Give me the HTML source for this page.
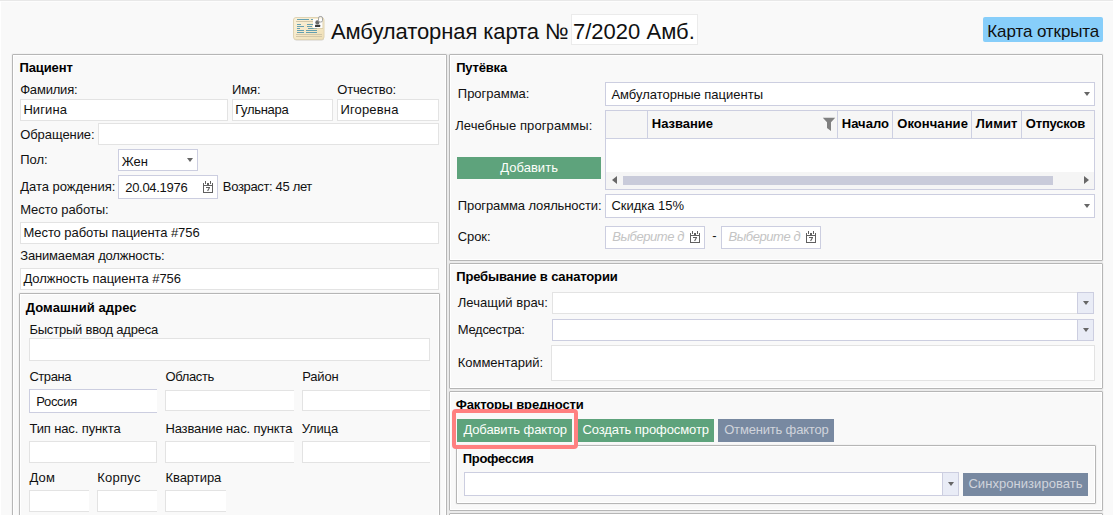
<!DOCTYPE html>
<html lang="ru"><head><meta charset="utf-8"><title>Амбулаторная карта</title>
<style>
html,body{margin:0;padding:0}
body{width:1113px;height:515px;overflow:hidden;background:#f9f9f9;position:relative;font-family:"Liberation Sans",sans-serif;font-size:13px;color:#111}
.a{position:absolute;box-sizing:border-box}
.t{position:absolute;white-space:nowrap;line-height:16px;height:16px}
.g{position:absolute;box-sizing:border-box;border:1px solid #b6b6b6;border-radius:1px;box-shadow:inset 0 0 0 1px #fff,0 0 0 1px #f3f3f3}
.i{position:absolute;box-sizing:border-box;border:1px solid #e3e3e3;background:#fff}
.c{position:absolute;box-sizing:border-box;border:1px solid #cccee0;background:#fff}
.ar{position:absolute;width:0;height:0;border-left:3px solid transparent;border-right:3px solid transparent;border-top:4px solid #666}
.db{position:absolute;box-sizing:border-box;border:1px solid #cccee0;background:#e9ecf6}
.bt{position:absolute;background:#5ea37c}
.bg{position:absolute;background:#7889a1}
.gap{position:absolute;background:#ebebeb}
</style></head>
<body>
<div class="a" style="left:0;top:0;width:1113px;height:1px;background:#e8e8e8"></div>
<div class="a" style="left:0;top:1px;width:1113px;height:1px;background:#fdfdfd"></div>
<div class="a" style="left:0;top:1px;width:1px;height:514px;background:#fff"></div>
<div class="g" style="left:12px;top:54px;width:435px;height:507px;background:#f9f9f9"></div>
<div class="g" style="left:19px;top:293px;width:421px;height:268px;background:#f9f9f9"></div>
<div class="g" style="left:449px;top:54px;width:654px;height:207px;background:#f9f9f9"></div>
<div class="g" style="left:449px;top:263px;width:654px;height:126px;background:#f9f9f9"></div>
<div class="g" style="left:449px;top:391px;width:654px;height:120px;background:#f9f9f9"></div>
<div class="g" style="left:456px;top:445px;width:640px;height:59px;background:#f9f9f9"></div>
<div class="g" style="left:449px;top:513px;width:654px;height:48px;background:#f9f9f9"></div>
<div class="gap" style="left:447px;top:54px;width:2px;height:461px"></div>
<div class="gap" style="left:449px;top:261px;width:654px;height:2px"></div>
<div class="gap" style="left:449px;top:389px;width:654px;height:2px"></div>
<div class="gap" style="left:449px;top:511px;width:654px;height:2px"></div>
<div class="i" style="left:571px;top:14px;width:127px;height:31px;border-color:#ebebeb"></div>
<div class="a" style="left:983px;top:17px;width:120px;height:25px;background:#87cefa;border-radius:2px"></div>
<div class="i" style="left:20px;top:99px;width:208px;height:22px;"></div>
<div class="i" style="left:232px;top:99px;width:101px;height:22px;"></div>
<div class="i" style="left:337px;top:99px;width:102px;height:22px;"></div>
<div class="i" style="left:98px;top:123px;width:341px;height:22px;"></div>
<div class="c" style="left:118px;top:149px;width:80px;height:22px;"></div>
<div class="ar" style="left:187px;top:158px;border-left-width:3.0px;border-right-width:3.0px;border-top:4px solid #666"></div>
<div class="c" style="left:118px;top:175px;width:100px;height:24px;"></div>
<div class="i" style="left:20px;top:222px;width:419px;height:22px;"></div>
<div class="i" style="left:20px;top:268px;width:419px;height:22px;"></div>
<div class="i" style="left:29px;top:338px;width:401px;height:23px;"></div>
<div class="c" style="left:29px;top:389px;width:128px;height:24px;border-right:none"></div>
<div class="i" style="left:165px;top:390px;width:129px;height:21px;border-right:none"></div>
<div class="i" style="left:302px;top:390px;width:128px;height:21px;border-right:none"></div>
<div class="i" style="left:29px;top:441px;width:128px;height:22px;"></div>
<div class="i" style="left:165px;top:441px;width:129px;height:22px;border-right:none"></div>
<div class="i" style="left:302px;top:441px;width:128px;height:22px;border-right:none"></div>
<div class="i" style="left:29px;top:490px;width:60px;height:22px;border-right:none"></div>
<div class="i" style="left:97px;top:490px;width:60px;height:22px;border-right:none"></div>
<div class="i" style="left:165px;top:490px;width:61px;height:22px;border-right:none"></div>
<div class="c" style="left:605px;top:82px;width:490px;height:24px;"></div>
<div class="ar" style="left:1084px;top:92px;border-left-width:3.0px;border-right-width:3.0px;border-top:4px solid #666"></div>
<div class="c" style="left:605px;top:110px;width:490px;height:80px"></div>
<div class="a" style="left:606px;top:111px;width:488px;height:27px;background:#f6f6f6"></div>
<div class="a" style="left:606px;top:138px;width:488px;height:1px;background:#cdd0e2"></div>
<div class="a" style="left:647px;top:111px;width:1px;height:27px;background:#cdd0e2"></div>
<div class="a" style="left:837px;top:111px;width:1px;height:27px;background:#cdd0e2"></div>
<div class="a" style="left:892px;top:111px;width:1px;height:27px;background:#cdd0e2"></div>
<div class="a" style="left:971px;top:111px;width:1px;height:27px;background:#cdd0e2"></div>
<div class="a" style="left:1021px;top:111px;width:1px;height:27px;background:#cdd0e2"></div>
<svg class="a" style="left:822px;top:117px" width="14" height="15" viewBox="0 0 14 15"><path d="M0.8 0.8 H13.2 L9 5.2 V14 L5 11 V5.2 Z" fill="#808080"/></svg>
<div class="a" style="left:606px;top:172px;width:488px;height:17px;background:#f5f5f5"></div>
<div class="a" style="left:623px;top:176px;width:430px;height:9px;background:#c9cbda"></div>
<div class="a" style="left:612px;top:176px;width:0;height:0;border-top:4.5px solid transparent;border-bottom:4.5px solid transparent;border-right:5px solid #686868"></div>
<div class="a" style="left:1084px;top:176px;width:0;height:0;border-top:4.5px solid transparent;border-bottom:4.5px solid transparent;border-left:5px solid #686868"></div>
<div class="bt" style="left:457px;top:157px;width:144px;height:22px"></div>
<div class="c" style="left:605px;top:194px;width:490px;height:24px;"></div>
<div class="ar" style="left:1084px;top:204px;border-left-width:3.0px;border-right-width:3.0px;border-top:4px solid #666"></div>
<div class="c" style="left:605px;top:226px;width:100px;height:23px;"></div>
<div class="c" style="left:721px;top:226px;width:100px;height:23px;"></div>
<div class="i" style="left:552px;top:292px;width:526px;height:22px;"></div>
<div class="db" style="left:1077px;top:292px;width:17px;height:22px"></div>
<div class="ar" style="left:1083px;top:301px;border-left-width:3.0px;border-right-width:3.0px;border-top:4px solid #666"></div>
<div class="c" style="left:552px;top:319px;width:526px;height:22px;"></div>
<div class="db" style="left:1077px;top:319px;width:17px;height:22px"></div>
<div class="ar" style="left:1083px;top:328px;border-left-width:3.0px;border-right-width:3.0px;border-top:4px solid #666"></div>
<div class="i" style="left:551px;top:345px;width:544px;height:36px;"></div>
<div class="bt" style="left:457px;top:419px;width:115px;height:23px"></div>
<div class="bt" style="left:578px;top:419px;width:136px;height:23px"></div>
<div class="bg" style="left:718px;top:419px;width:116px;height:23px"></div>
<div class="c" style="left:464px;top:472px;width:479px;height:24px;"></div>
<div class="db" style="left:942px;top:472px;width:17px;height:24px"></div>
<div class="ar" style="left:948px;top:482px;border-left-width:3.0px;border-right-width:3.0px;border-top:4px solid #666"></div>
<div class="bg" style="left:963px;top:473px;width:125px;height:23px"></div>
<svg class="a" style="left:203px;top:181px" width="10" height="12" viewBox="0 0 10 12" shape-rendering="crispEdges"><g fill="#606060"><rect x="0" y="2" width="1" height="10"/><rect x="9" y="2" width="1" height="10"/><rect x="0" y="11" width="10" height="1"/><rect x="0" y="4" width="10" height="1"/><rect x="2" y="0" width="1" height="3"/><rect x="7" y="0" width="1" height="3"/><rect x="4" y="2" width="2" height="2"/><rect x="3" y="6" width="4" height="1"/></g><path d="M6.4 6.8 L4.6 10" stroke="#606060" stroke-width="1.1" fill="none" shape-rendering="auto"/></svg>
<svg class="a" style="left:690px;top:231px" width="10" height="12" viewBox="0 0 10 12" shape-rendering="crispEdges"><g fill="#606060"><rect x="0" y="2" width="1" height="10"/><rect x="9" y="2" width="1" height="10"/><rect x="0" y="11" width="10" height="1"/><rect x="0" y="4" width="10" height="1"/><rect x="2" y="0" width="1" height="3"/><rect x="7" y="0" width="1" height="3"/><rect x="4" y="2" width="2" height="2"/><rect x="3" y="6" width="4" height="1"/></g><path d="M6.4 6.8 L4.6 10" stroke="#606060" stroke-width="1.1" fill="none" shape-rendering="auto"/></svg>
<svg class="a" style="left:806px;top:231px" width="10" height="12" viewBox="0 0 10 12" shape-rendering="crispEdges"><g fill="#606060"><rect x="0" y="2" width="1" height="10"/><rect x="9" y="2" width="1" height="10"/><rect x="0" y="11" width="10" height="1"/><rect x="0" y="4" width="10" height="1"/><rect x="2" y="0" width="1" height="3"/><rect x="7" y="0" width="1" height="3"/><rect x="4" y="2" width="2" height="2"/><rect x="3" y="6" width="4" height="1"/></g><path d="M6.4 6.8 L4.6 10" stroke="#606060" stroke-width="1.1" fill="none" shape-rendering="auto"/></svg>
<svg class="a" style="left:290px;top:12px" width="38" height="32" viewBox="0 0 38 32">
<defs><linearGradient id="cg" x1="0" y1="0" x2="1" y2="1"><stop offset="0" stop-color="#fbf2da"/><stop offset="1" stop-color="#efdfb6"/></linearGradient></defs>
<rect x="4" y="6.5" width="30" height="22" rx="2.5" fill="#8a8270" opacity=".35"/>
<rect x="3.5" y="5.5" width="30.5" height="22" rx="2.5" fill="url(#cg)" stroke="#e0d4b4" stroke-width="1"/>
<g fill="#4b93ad" fill-opacity=".85" shape-rendering="crispEdges"><rect x="7" y="7" width="12" height="1"/><rect x="21" y="7" width="2" height="1"/>
<rect x="7" y="12" width="4" height="1"/><rect x="17" y="12" width="6" height="1"/>
<rect x="7" y="14" width="7" height="1"/><rect x="17" y="14" width="5" height="1"/>
<rect x="7" y="16" width="3" height="1"/><rect x="18" y="16" width="9" height="1"/>
<rect x="7" y="18" width="7" height="1"/><rect x="16" y="18" width="11" height="1"/>
<rect x="7" y="20" width="7" height="1"/><rect x="16" y="20" width="11" height="1"/></g>
<g fill="#d3c7a8" shape-rendering="crispEdges"><rect x="6" y="9" width="17" height="1"/><rect x="6" y="22" width="26" height="1"/><rect x="6" y="24" width="26" height="1"/></g>
<rect x="23.5" y="7.5" width="9.5" height="9.5" fill="#cdbf9c" opacity=".6"/>
<rect x="23" y="7" width="9.5" height="9" fill="#fdfdfd"/>
<circle cx="27.4" cy="10.4" r="2.1" fill="#6a6a6a"/><rect x="25" y="12.8" width="5.2" height="2.2" rx=".5" fill="#3c3c3c"/>
<rect x="28.5" y="4.5" width="4" height="5.5" rx="1.6" fill="#fff" fill-opacity=".55" stroke="#a2a2a2" stroke-width="1"/>
</svg>
<div class="t" style="left:331.0px;top:18px;letter-spacing:-0.093px;color:#111;font-size:22px;line-height:28px;height:28px;">Амбулаторная карта №</div>
<div class="t" style="left:572.9px;top:18px;letter-spacing:0.030px;color:#111;font-size:22px;line-height:28px;height:28px;">7/2020 Амб.</div>
<div class="t" style="left:987.3px;top:21px;letter-spacing:-0.104px;color:#101010;font-size:17px;line-height:22px;height:22px;">Карта открыта</div>
<div class="t" style="left:19.4px;top:60px;letter-spacing:-0.102px;color:#000;font-weight:700;">Пациент</div>
<div class="t" style="left:20.2px;top:82px;letter-spacing:-0.202px;color:#111;">Фамилия:</div>
<div class="t" style="left:232.0px;top:82px;letter-spacing:-0.134px;color:#111;">Имя:</div>
<div class="t" style="left:337.2px;top:82px;letter-spacing:-0.147px;color:#111;">Отчество:</div>
<div class="t" style="left:23.4px;top:102px;letter-spacing:0.090px;color:#111;">Нигина</div>
<div class="t" style="left:235.2px;top:102px;letter-spacing:-0.303px;color:#111;">Гульнара</div>
<div class="t" style="left:340.4px;top:102px;letter-spacing:0.173px;color:#111;">Игоревна</div>
<div class="t" style="left:20.2px;top:127px;letter-spacing:-0.069px;color:#111;">Обращение:</div>
<div class="t" style="left:20.2px;top:152px;letter-spacing:-0.025px;color:#111;">Пол:</div>
<div class="t" style="left:121.8px;top:154px;letter-spacing:-0.022px;color:#111;">Жен</div>
<div class="t" style="left:20.2px;top:179px;letter-spacing:-0.009px;color:#111;">Дата рождения:</div>
<div class="t" style="left:125.2px;top:180px;letter-spacing:-0.288px;color:#111;">20.04.1976</div>
<div class="t" style="left:222.8px;top:179px;letter-spacing:-0.338px;color:#111;">Возраст: 45 лет</div>
<div class="t" style="left:20.2px;top:202px;letter-spacing:-0.056px;color:#111;">Место работы:</div>
<div class="t" style="left:23.4px;top:225px;letter-spacing:-0.072px;color:#111;">Место работы пациента #756</div>
<div class="t" style="left:20.2px;top:248px;letter-spacing:-0.163px;color:#111;">Занимаемая должность:</div>
<div class="t" style="left:23.4px;top:271px;letter-spacing:-0.034px;color:#111;">Должность пациента #756</div>
<div class="t" style="left:25.8px;top:300px;letter-spacing:0.067px;color:#000;font-weight:700;">Домашний адрес</div>
<div class="t" style="left:29.4px;top:322px;letter-spacing:-0.210px;color:#111;">Быстрый ввод адреса</div>
<div class="t" style="left:29.4px;top:369px;letter-spacing:-0.436px;color:#111;">Страна</div>
<div class="t" style="left:165.4px;top:369px;letter-spacing:-0.347px;color:#111;">Область</div>
<div class="t" style="left:302.2px;top:369px;letter-spacing:-0.148px;color:#111;">Район</div>
<div class="t" style="left:36.2px;top:394px;letter-spacing:-0.307px;color:#111;">Россия</div>
<div class="t" style="left:29.4px;top:421px;letter-spacing:-0.121px;color:#111;">Тип нас. пункта</div>
<div class="t" style="left:165.4px;top:421px;letter-spacing:-0.122px;color:#111;">Название нас. пункта</div>
<div class="t" style="left:301.8px;top:421px;letter-spacing:-0.144px;color:#111;">Улица</div>
<div class="t" style="left:29.4px;top:470px;letter-spacing:0.225px;color:#111;">Дом</div>
<div class="t" style="left:97.2px;top:470px;letter-spacing:0.260px;color:#111;">Корпус</div>
<div class="t" style="left:165.4px;top:470px;letter-spacing:-0.036px;color:#111;">Квартира</div>
<div class="t" style="left:456.2px;top:60px;letter-spacing:-0.180px;color:#000;font-weight:700;">Путёвка</div>
<div class="t" style="left:457.8px;top:86px;letter-spacing:-0.013px;color:#111;">Программа:</div>
<div class="t" style="left:611.4px;top:87px;letter-spacing:-0.004px;color:#111;">Амбулаторные пациенты</div>
<div class="t" style="left:455.2px;top:118px;letter-spacing:0.088px;color:#111;">Лечебные программы:</div>
<div class="t" style="left:651.8px;top:116px;letter-spacing:-0.022px;color:#000;font-weight:700;">Название</div>
<div class="t" style="left:841.8px;top:116px;letter-spacing:0.015px;color:#000;font-weight:700;">Начало</div>
<div class="t" style="left:897.2px;top:116px;letter-spacing:0.078px;color:#000;font-weight:700;">Окончание</div>
<div class="t" style="left:975.8px;top:116px;letter-spacing:0.141px;color:#000;font-weight:700;">Лимит</div>
<div class="t" style="left:1025.8px;top:116px;letter-spacing:-0.192px;color:#000;font-weight:700;">Отпусков</div>
<div class="t" style="left:500.2px;top:160px;letter-spacing:0.043px;color:#fdfffb;">Добавить</div>
<div class="t" style="left:457.8px;top:198px;letter-spacing:-0.106px;color:#111;">Программа лояльности:</div>
<div class="t" style="left:611.4px;top:198px;letter-spacing:-0.017px;color:#111;">Скидка 15%</div>
<div class="t" style="left:457.8px;top:229px;letter-spacing:-0.111px;color:#111;">Срок:</div>
<div class="t" style="left:612.2px;top:229px;letter-spacing:-0.431px;color:#c4c4c4;font-style:italic;">Выберите д</div>
<div class="t" style="left:728.4px;top:229px;letter-spacing:-0.431px;color:#c4c4c4;font-style:italic;">Выберите д</div>
<div class="t" style="left:712.2px;top:228px;letter-spacing:1.256px;color:#111;">-</div>
<div class="t" style="left:456.2px;top:269px;letter-spacing:-0.144px;color:#000;font-weight:700;">Пребывание в санатории</div>
<div class="t" style="left:457.8px;top:295px;letter-spacing:0.043px;color:#111;">Лечащий врач:</div>
<div class="t" style="left:457.8px;top:322px;letter-spacing:-0.297px;color:#111;">Медсестра:</div>
<div class="t" style="left:457.8px;top:355px;letter-spacing:-0.025px;color:#111;">Комментарий:</div>
<div class="t" style="left:455.8px;top:397px;letter-spacing:-0.144px;color:#000;font-weight:700;">Факторы вредности</div>
<div class="t" style="left:463.4px;top:422px;letter-spacing:-0.100px;color:#fdfffb;">Добавить фактор</div>
<div class="t" style="left:582.4px;top:422px;letter-spacing:-0.079px;color:#fdfffb;">Создать профосмотр</div>
<div class="t" style="left:724.2px;top:422px;letter-spacing:-0.176px;color:#d0d4dc;">Отменить фактор</div>
<div class="t" style="left:462.8px;top:451px;letter-spacing:-0.303px;color:#000;font-weight:700;">Профессия</div>
<div class="t" style="left:968.4px;top:476px;letter-spacing:0.054px;color:#d0d4dc;">Синхронизировать</div>
<div class="a" style="left:452px;top:409px;width:126px;height:40px;border:4px solid #ff8080;border-radius:4px"></div>
</body></html>
